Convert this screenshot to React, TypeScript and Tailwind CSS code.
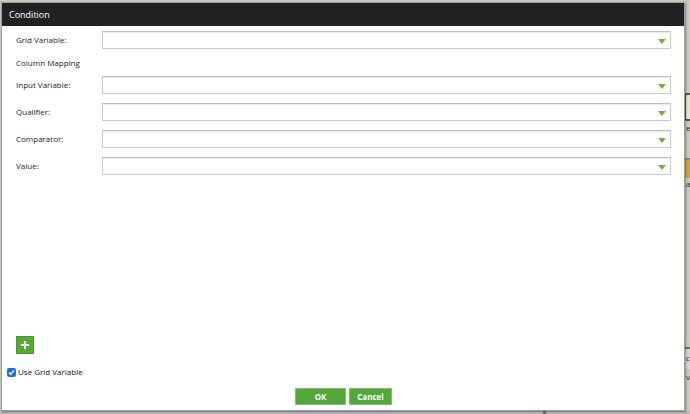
import React from "react";

const font = { fontFamily: '"Open Sans", "Noto Sans", sans-serif' };

function Arrow() {
  return (
    <svg width="8" height="5" viewBox="0 0 8 5" className="absolute right-[4px] top-[7px]">
      <path d="M0 0 L8 0 L4 5 Z" fill="#6ab43c" />
    </svg>
  );
}

function SelectBox() {
  return (
    <div className="relative flex-1 h-[18px] bg-white border border-[#c9c9c9] border-t-[#bdbdbd] shadow-[inset_0_1px_1px_rgba(0,0,0,0.08)]">
      <Arrow />
    </div>
  );
}

function Row({ label, mb = "mb-[9px]" }: { label: string; mb?: string }) {
  return (
    <div className={`flex items-center h-[18px] ${mb}`}>
      <div className="w-[86px] text-[8px] text-[#222]">{label}</div>
      <SelectBox />
    </div>
  );
}

export default function App() {
  return (
    <div className="relative w-[690px] h-[414px] overflow-hidden bg-[#c7cabd]" style={font}>
      {/* background canvas bits on the right edge */}
      <div className="absolute left-[684px] top-[93px] w-[12px] h-[28px] border-2 border-[#555] rounded-[3px] bg-[#e9e2c8]" />
      <div className="absolute left-[686px] top-[122px] text-[8px] text-[#222]">e</div>
      <div className="absolute left-[684px] top-[160px] w-[8px] h-[18px] bg-[#c9a646]" />
      <div className="absolute left-[684px] top-[158px] w-[8px] h-[2px] bg-[#888]" />
      <div className="absolute left-[686px] top-[178px] text-[8px] text-[#222]">a</div>
      <div className="absolute left-[684px] top-[347px] w-[8px] h-[2px] bg-[#3a9a2a]" />
      <div className="absolute left-[684px] top-[349px] w-[8px] h-[20px] bg-[#d3d3d3]" />
      <div className="absolute left-[686px] top-[352px] text-[8px] text-[#222]">c</div>
      <div className="absolute left-[686px] top-[371px] text-[8px] text-[#222]">v</div>
      <div className="absolute left-0 top-[411px] w-[690px] h-[3px] bg-[#b8b8b8]" />
      <div className="absolute left-[543px] top-[410px] w-[3px] h-[4px] bg-[#3a9a2a]" />

      {/* dialog */}
      <div className="absolute left-[1px] top-[2px] w-[684px] h-[409px] bg-white border border-[#9c9c9c] shadow-[1px_1px_2px_rgba(0,0,0,0.35)] flex flex-col">
        <div className="h-[23px] bg-[#222222] text-white text-[9px] pl-[7px] flex items-center shrink-0">
          Condition
        </div>
        <div className="flex-1 flex flex-col pl-[14px] pr-[13px] pt-[5px]">
          <Row label="Grid Variable:" mb="mb-0" />
          <div className="h-[27px] flex items-center text-[8px] text-[#222]">Column Mapping</div>
          <Row label="Input Variable:" />
          <Row label="Qualifier:" />
          <Row label="Comparator:" />
          <Row label="Value:" mb="mb-0" />
          <div className="flex-1" />
          <div className="w-[18px] h-[18px] bg-[#58a83c] border border-[#4b9432] flex items-center justify-center">
            <svg width="10" height="10" viewBox="0 0 10 10">
              <path d="M5 1 V9 M1 5 H9" stroke="white" strokeWidth="2" />
            </svg>
          </div>
          <div className="flex items-center -ml-[9px] mt-[13px] h-[10px]">
            <div className="w-[9px] h-[9px] rounded-[2px] bg-[#1c6fe0] flex items-center justify-center">
              <svg width="7" height="7" viewBox="0 0 7 7">
                <path d="M1 3.6 L2.8 5.4 L6 1.4" stroke="white" strokeWidth="1.4" fill="none" />
              </svg>
            </div>
            <span className="ml-[2px] text-[8px] text-[#111]">Use Grid Variable</span>
          </div>
          <div className="flex justify-center gap-[3px] mt-[11px] mb-[5px]">
            <div className="w-[51px] h-[17px] bg-[#55a63b] border border-[#84bd6f] text-white text-[8px] font-bold flex items-center justify-center">
              OK
            </div>
            <div className="w-[43px] h-[17px] bg-[#55a63b] border border-[#84bd6f] text-white text-[8px] font-bold flex items-center justify-center">
              Cancel
            </div>
          </div>
        </div>
      </div>
    </div>
  );
}
